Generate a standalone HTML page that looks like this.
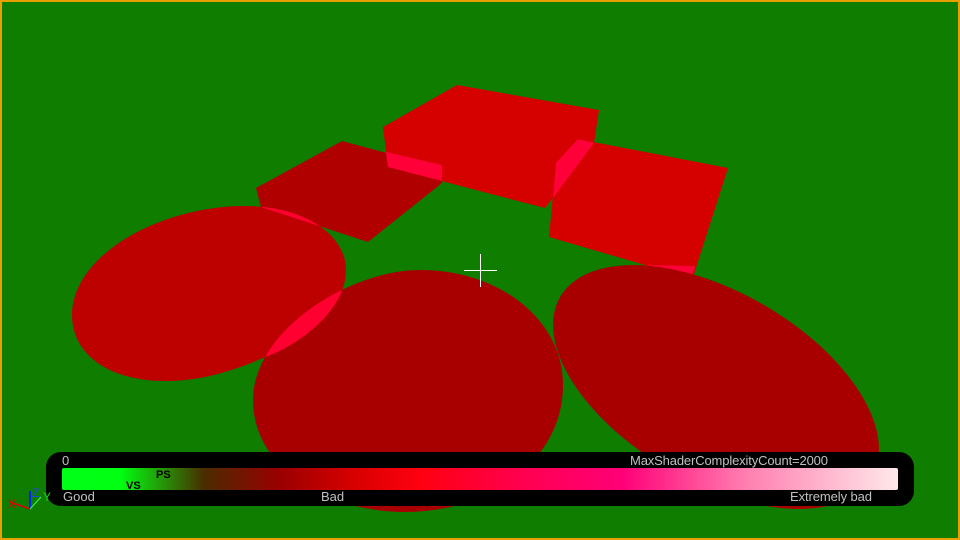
<!DOCTYPE html>
<html><head><meta charset="utf-8"><style>
html,body{margin:0;padding:0;width:960px;height:540px;overflow:hidden;background:#0e7d00}
svg{display:block}
text{font-family:"Liberation Sans",sans-serif}
</style></head><body>
<svg width="960" height="540" viewBox="0 0 960 540" xmlns="http://www.w3.org/2000/svg">
<defs>
<linearGradient id="g" x1="0" x2="1" y1="0" y2="0">
<stop offset="0" stop-color="#00ff18"/>
<stop offset="0.07" stop-color="#00ff10"/>
<stop offset="0.17" stop-color="#4a2c00"/>
<stop offset="0.26" stop-color="#9a0000"/>
<stop offset="0.35" stop-color="#d80000"/>
<stop offset="0.43" stop-color="#ff0010"/>
<stop offset="0.55" stop-color="#ff0050"/>
<stop offset="0.67" stop-color="#ff0078"/>
<stop offset="0.82" stop-color="#ff80b0"/>
<stop offset="1" stop-color="#ffe8ea"/>
</linearGradient>
<path id="L" d="M72,315 C72,255 160,206 245,206 C305,206 346,235 346,270 C346,310 300,345 263,358 C230,372 200,381 165,381 C110,381 72,355 72,315 Z"/>
<clipPath id="cC"><path d="M420,270 C350,270 253,330 253,400 C253,470 330,512 405,512 C490,512 563,460 563,385 C563,320 500,270 420,270 Z"/></clipPath>
<clipPath id="cR"><ellipse cx="716" cy="387" rx="180" ry="95" transform="rotate(30 716 387)"/></clipPath>
<clipPath id="cQ"><polygon points="256,188 342,141 442,168 442,183 368,242 261,207"/></clipPath>
</defs>
<rect x="0" y="0" width="960" height="540" fill="#0e7d00"/>
<polygon points="256,188 342,141 442,168 442,183 368,242 261,207" fill="#b00000"/>
<polygon points="383,127 457,85 599,110 594,143 579,140 556,164 553,198 545,208 388,167" fill="#d50000"/>
<polygon points="386,152 442,165 442,181 388,167" fill="#ff0038"/>
<polygon points="578,139 728,168 693,277 645,265 549,237 556,163" fill="#d50000"/>
<polygon points="556,163 578,139 594,143 553,198" fill="#ff0038"/>
<polygon points="645,265 695,266 692,277" fill="#ff0038"/>
<use href="#L" fill="#bd0000"/>
<use href="#L" fill="#ff0030" clip-path="url(#cQ)"/>
<path d="M420,270 C350,270 253,330 253,400 C253,470 330,512 405,512 C490,512 563,460 563,385 C563,320 500,270 420,270 Z" fill="#a80000"/>
<use href="#L" fill="#ff0030" clip-path="url(#cC)"/>
<ellipse cx="716" cy="387" rx="180" ry="95" transform="rotate(30 716 387)" fill="#a80000"/>
<path d="M420,270 C350,270 253,330 253,400 C253,470 330,512 405,512 C490,512 563,460 563,385 C563,320 500,270 420,270 Z" fill="#ff0030" clip-path="url(#cR)"/>
<line x1="464" y1="270.5" x2="497" y2="270.5" stroke="#fff" stroke-width="1"/>
<line x1="480.5" y1="254" x2="480.5" y2="287" stroke="#fff" stroke-width="1"/>
<rect x="46" y="452" width="868" height="54" rx="15" fill="#000"/>
<rect x="62" y="468" width="836" height="22" rx="2" fill="url(#g)"/>
<text x="62" y="465" font-size="13" fill="#c0c0c0">0</text>
<text x="630" y="465" font-size="13" fill="#c0c0c0" textLength="198">MaxShaderComplexityCount=2000</text>
<text x="63" y="501" font-size="13" fill="#c0c0c0">Good</text>
<text x="321" y="501" font-size="13" fill="#c0c0c0">Bad</text>
<text x="790" y="501" font-size="13" fill="#c0c0c0" textLength="82">Extremely bad</text>
<text x="156" y="478" font-size="11" font-weight="bold" font-family="Liberation Mono" fill="#000">PS</text>
<text x="126" y="489" font-size="11" font-weight="bold" font-family="Liberation Mono" fill="#000">VS</text>
<line x1="30" y1="509" x2="10" y2="502" stroke="#e00000" stroke-width="1.5"/>
<line x1="30" y1="509" x2="30" y2="491" stroke="#0020ff" stroke-width="2"/>
<line x1="30" y1="509" x2="41" y2="497" stroke="#40ff40" stroke-width="1"/>
<text x="8" y="508" font-size="12" fill="#e00000">X</text>
<text x="32" y="497" font-size="12" fill="#2040ff">Z</text>
<text x="43" y="501" font-size="12" fill="#20d020">Y</text>
<rect x="1" y="1" width="958" height="538" fill="none" stroke="#e8a000" stroke-width="2"/>
</svg>
</body></html>
